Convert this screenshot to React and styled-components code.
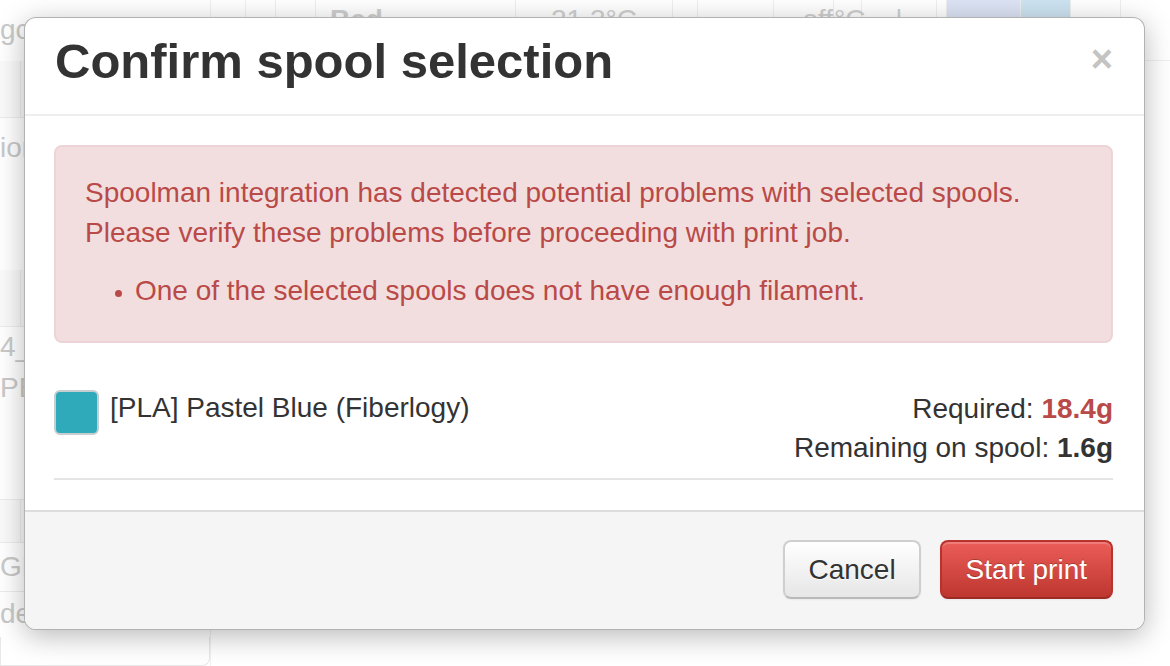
import React from "react";
import styled, { createGlobalStyle } from "styled-components";

const Global = createGlobalStyle`
  html, body { margin: 0; padding: 0; background: #fff; }
  body { font-family: "Liberation Sans", Arial, sans-serif; color: #333; }
  #root { width: 1170px; height: 666px; overflow: hidden; position: relative; }
`;

/* ---------- faded page behind the modal ---------- */
const Page = styled.div`
  width: 1170px;
  height: 666px;
  display: flex;
  color: #c9c9c9;
  font-size: 28px;
  overflow: hidden;
`;

const Sidebar = styled.div`
  width: 210px;
  flex: none;
  display: flex;
  flex-direction: column;
  border-right: 1px solid #f0f0f0;
`;

const SideRow = styled.div`
  height: ${(p) => p.h}px;
  flex: none;
  display: flex;
  align-items: center;
  border-bottom: 1px solid ${(p) => (p.line ? "#ececec" : "transparent")};
  background: ${(p) => (p.shade ? "#fafafa" : "transparent")};
  white-space: nowrap;
`;

const SideCell = styled.div`
  width: ${(p) => p.w}px;
  height: 100%;
  border-right: 1px solid #ececec;
  flex: none;
`;

const Main = styled.div`
  flex: 1;
  display: flex;
  flex-direction: column;
`;

const TopRow = styled.div`
  height: 60px;
  display: flex;
  border-bottom: 1px solid #f0f0f0;
`;

const TopCell = styled.div`
  width: ${(p) => p.w}px;
  flex: none;
  border-right: 1px solid #efefef;
  background: ${(p) => p.bg || "transparent"};
  font-weight: ${(p) => (p.bold ? 700 : 400)};
  display: flex;
  align-items: flex-start;
  justify-content: ${(p) => p.justify || "flex-start"};
  padding-top: 4px;
  box-sizing: border-box;
  padding-left: ${(p) => p.pl || 0}px;
  color: #cfcfcf;
`;

const SideBox = styled.div`
  margin-top: auto;
  height: 44px;
  border: 1px solid #e8e8e8;
  border-top: none;
  border-radius: 0 0 8px 0;
`;

/* ---------- modal ---------- */
const Modal = styled.div`
  position: absolute;
  left: 24px;
  top: 17px;
  width: 1121px;
  height: 613px;
  box-sizing: border-box;
  background: #fff;
  border: 1px solid rgba(0, 0, 0, 0.3);
  border-radius: 12px;
  box-shadow: 0 6px 28px rgba(0, 0, 0, 0.28);
  display: flex;
  flex-direction: column;
  overflow: hidden;
  font-family: "Liberation Sans", Arial, sans-serif;
`;

const Header = styled.div`
  height: 98px;
  flex: none;
  box-sizing: border-box;
  border-bottom: 2px solid #eee;
  display: flex;
  align-items: center;
  justify-content: space-between;
  padding: 0 31px 0 30px;
`;

const Title = styled.h3`
  margin: 0;
  font-size: 49px;
  font-weight: 700;
  color: #333;
  line-height: 1;
  position: relative;
  top: -5px;
`;

const Close = styled.button`
  border: none;
  background: none;
  padding: 0;
  font-family: "Liberation Sans", Arial, sans-serif;
  font-size: 38px;
  font-weight: 700;
  line-height: 1;
  color: #c4c4c4;
  position: relative;
  top: -7px;
`;

const Body = styled.div`
  flex: 1;
  padding: 29px 31px 0 29px;
  display: flex;
  flex-direction: column;
`;

const Alert = styled.div`
  background: #f2dede;
  border: 2px solid #eed3d7;
  border-radius: 8px;
  color: #b94a48;
  font-size: 28px;
  line-height: 40px;
  padding: 26px 30px 20px 29px;
  box-sizing: border-box;
  height: 198px;
`;

const AlertText = styled.p`
  margin: 0;
`;

const AlertList = styled.ul`
  margin: 18px 0 0 0;
  padding-left: 50px;
  li::marker { font-size: 22px; }
`;

const SpoolRow = styled.div`
  margin-top: 46px;
  display: flex;
  justify-content: space-between;
  padding-bottom: 11px;
  border-bottom: 2px solid #e4e4e4;
`;

const SpoolName = styled.div`
  display: flex;
  align-items: flex-start;
  gap: 11px;
  font-size: 28px;
  line-height: 38px;
  color: #333;
`;

const Swatch = styled.div`
  width: 45px;
  height: 45px;
  box-sizing: border-box;
  margin-top: 1px;
  border: 2px solid #c6ced0;
  border-radius: 6px;
  background: ${(p) => p.color};
`;

const Amounts = styled.div`
  text-align: right;
  font-size: 28px;
  line-height: 39px;
  color: #333;
`;

const Value = styled.b`
  color: ${(p) => (p.danger ? "#b94a48" : "#333")};
`;

const Footer = styled.div`
  height: 119px;
  flex: none;
  box-sizing: border-box;
  background: #f5f5f5;
  border-top: 2px solid #ddd;
  display: flex;
  align-items: center;
  justify-content: flex-end;
  gap: 19px;
  padding: 0 31px 2px 30px;
`;

const Button = styled.button`
  height: 59px;
  box-sizing: border-box;
  padding: 0 ${(p) => (p.primary ? 24 : 23)}px;
  font-family: "Liberation Sans", Arial, sans-serif;
  font-size: 28px;
  border-radius: 8px;
  cursor: pointer;
  border: 2px solid ${(p) => (p.primary ? "#b8332d" : "#cfcfcf")};
  border-bottom-color: ${(p) => (p.primary ? "#9c2a25" : "#b9b9b9")};
  color: ${(p) => (p.primary ? "#fff" : "#333")};
  text-shadow: ${(p) =>
    p.primary ? "0 -1px 0 rgba(0,0,0,0.25)" : "0 1px 1px rgba(255,255,255,0.75)"};
  background: ${(p) =>
    p.primary
      ? "linear-gradient(to bottom, #ec5d58, #bd362f)"
      : "linear-gradient(to bottom, #ffffff, #e6e6e6)"};
  box-shadow: inset 0 2px 0 rgba(255, 255, 255, 0.2), 0 1px 2px rgba(0, 0, 0, 0.05);
`;

export default function App() {
  return (
    <>
      <Global />
      <Page>
        <Sidebar>
          <SideRow h={60}>gcode</SideRow>
          <SideRow h={56} line shade>
            <SideCell w={20} />
          </SideRow>
          <SideRow h={60}>ion</SideRow>
          <SideRow h={90} />
          <SideRow h={56} line shade>
            <SideCell w={20} />
          </SideRow>
          <SideRow h={40}>4_</SideRow>
          <SideRow h={40}>PET</SideRow>
          <SideRow h={90} line />
          <SideRow h={42} line shade>
            <SideCell w={20} />
          </SideRow>
          <SideRow h={48} line>GE</SideRow>
          <SideRow h={44}>der</SideRow>
          <SideBox />
        </Sidebar>
        <Main>
          <TopRow>
            <TopCell w={35} />
            <TopCell w={30} />
            <TopCell w={40} />
            <TopCell w={200} bold pl={14}>Bed</TopCell>
            <TopCell w={157} justify="center">21.3°C</TopCell>
            <TopCell w={25} />
            <TopCell w={76} />
            <TopCell w={60} justify="flex-end">off</TopCell>
            <TopCell w={28}>°C</TopCell>
            <TopCell w={75} justify="center">|</TopCell>
            <TopCell w={10} />
            <TopCell w={74} bg="#dbe3f4" />
            <TopCell w={50} bg="#cde3f1" />
            <TopCell w={50} />
          </TopRow>
        </Main>
      </Page>

      <Modal>
        <Header>
          <Title>Confirm spool selection</Title>
          <Close aria-label="Close">×</Close>
        </Header>
        <Body>
          <Alert>
            <AlertText>
              Spoolman integration has detected potential problems with selected spools.
              <br />
              Please verify these problems before proceeding with print job.
            </AlertText>
            <AlertList>
              <li>One of the selected spools does not have enough filament.</li>
            </AlertList>
          </Alert>
          <SpoolRow>
            <SpoolName>
              <Swatch color="#2eaabb" />
              <span>[PLA] Pastel Blue (Fiberlogy)</span>
            </SpoolName>
            <Amounts>
              <div>
                Required: <Value danger>18.4g</Value>
              </div>
              <div>
                Remaining on spool: <Value>1.6g</Value>
              </div>
            </Amounts>
          </SpoolRow>
        </Body>
        <Footer>
          <Button>Cancel</Button>
          <Button primary>Start print</Button>
        </Footer>
      </Modal>
    </>
  );
}
